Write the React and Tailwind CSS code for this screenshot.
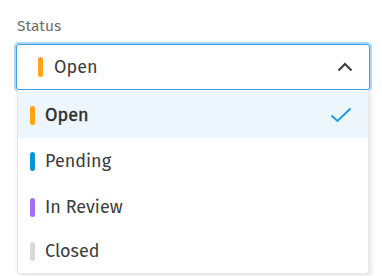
import React from "react";

const items = [
  { label: "Open", color: "bg-[#ffa31a]", selected: true, h: "h-[47px] pt-[1px]" },
  { label: "Pending", color: "bg-[#0696d7]", h: "h-[46px]" },
  { label: "In Review", color: "bg-[#a56ef7]", h: "h-[46px]" },
  { label: "Closed", color: "bg-[#d9d9d9]", h: "h-[43px]" },
];

export default function App() {
  return (
    <div
      className="w-[382px] h-[276px] bg-white overflow-hidden"
      style={{ fontFamily: '"Fira Sans", "Noto Sans", "Open Sans", sans-serif' }}
    >
      <div className="pl-[16px] pr-[12px] pt-[16px]">
        <div className="text-[15.5px] leading-[20px] text-[#707070] pl-[1px]">Status</div>
        <div className="mt-[8px] h-[46px] rounded-[3px] border border-[#3aa0e4] ring-2 ring-[#a9d7f6] flex items-center pl-[21px] pr-[16px]">
          <span className="w-[5px] h-[20px] rounded-full bg-[#ffa31a]" />
          <span className="ml-[11px] text-[18px] text-[#3c3c3c]">Open</span>
          <svg className="ml-auto" width="16" height="10" viewBox="0 0 16 10" fill="none">
            <path d="M1.5 8.5 L8 2 L14.5 8.5" stroke="#3c3c3c" strokeWidth="2" />
          </svg>
        </div>
        <div className="mx-[1px] pt-[1px] rounded-b-[4px] bg-white shadow-[2px_2px_6px_rgba(0,0,0,0.12)] border-x border-b border-[#e6e9ec]">
          {items.map((it) => (
            <div
              key={it.label}
              className={`${it.h} flex items-center pl-[12px] pr-[16px] ${it.selected ? "bg-[#edf6fc]" : ""}`}
            >
              <span className={`w-[5px] h-[19px] rounded-full ${it.color}`} />
              <span
                className={`ml-[10px] text-[18px] ${it.selected ? "text-[#2e2e2e] [-webkit-text-stroke:0.4px_#2e2e2e]" : "text-[#3c3c3c]"}`}
              >
                {it.label}
              </span>
              {it.selected && (
                <svg className="ml-auto" width="22" height="16" viewBox="0 0 22 16" fill="none">
                  <path d="M1.5 8.5 L7.5 14 L20.5 1.5" stroke="#1e9be0" strokeWidth="2" />
                </svg>
              )}
            </div>
          ))}
        </div>
      </div>
    </div>
  );
}
